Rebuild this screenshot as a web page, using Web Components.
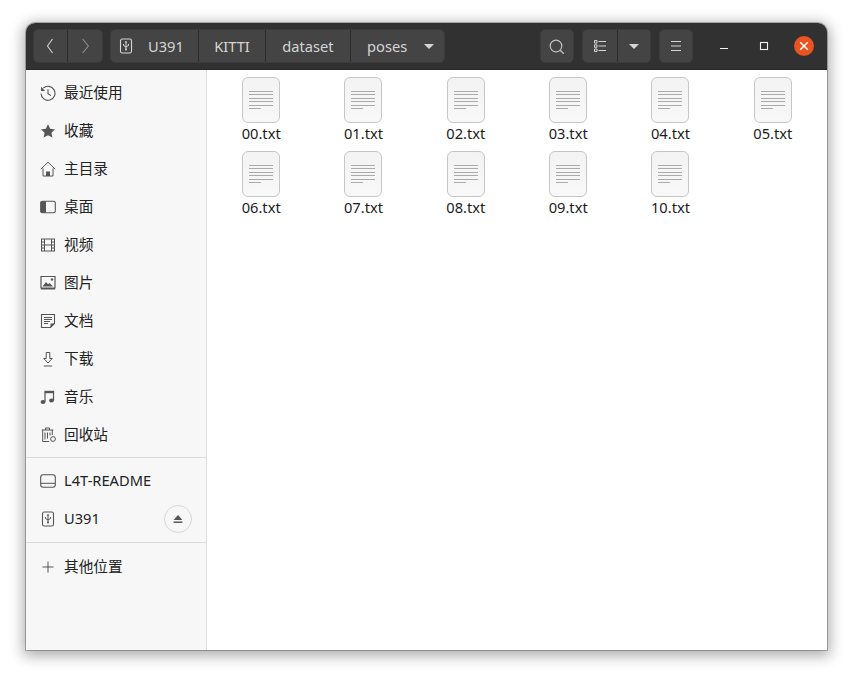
<!DOCTYPE html>
<html>
<head>
<meta charset="utf-8">
<title>poses</title>
<style>
  html, body { margin: 0; height: 100%; background: #fff; }
  body { font: 14.67px "Noto Sans", "Noto Sans CJK SC", sans-serif; }
</style>
</head>
<body>
<files-window></files-window>
<script>
  const ICONS = {
    recent: '<path d="M3.200 3.200A7 7 0 1 1 1 8.500" fill="none" stroke-width="1.100"/><path d="M1 1.800v4.200h4.200z" stroke="none"/><path d="M8 4.200v4.600l3 1.800" fill="none" stroke-width="1.100"/>',
    star: '<path d="M8 1.300l2.100 4.500 4.900.6-3.600 3.300 1 4.900L8 12.200l-4.400 2.400 1-4.900L1 6.400l4.900-.6z" stroke="none"/>',
    home: '<path d="M.8 8.200L8 1.200l7.200 7" fill="none" stroke-width="1"/><path d="M3 7.400V15h10V7.400" fill="none" stroke-width="1"/><path d="M6 15v-4.500h4V15z" stroke="none"/>',
    desktop: '<rect x=".7" y="2.200" width="14.600" height="11.600" rx="1.600" fill="none" stroke-width="1.100"/><path d="M.7 3.600c0-.8.6-1.400 1.400-1.400H6v11.600H2.100c-.8 0-1.400-.6-1.400-1.400z" stroke="none"/>',
    video: '<rect x="1.500" y="2" width="13" height="12" fill="none" stroke-width="1"/><path d="M4.500 2v12M11.500 2v12M4.500 8h7M1.500 5h3M1.500 8h3M1.500 11h3M11.500 5h3M11.500 8h3M11.500 11h3" fill="none" stroke-width="1"/>',
    image: '<path d="M1 1.500h14v11.500H1z" fill="none" stroke-width="1.200"/><path d="M1 13h14v1.500H1z" stroke="none"/><path d="M2.500 11.500l3.500-4.500 2 2.200 1.500-1.200 3.500 3.500z" stroke="none"/><circle cx="12" cy="4.500" r="1.200" stroke="none"/>',
    doc: '<path d="M1.500 1.500h13v9l-4 4h-9z" fill="none" stroke-width="1.100"/><path d="M4 4.500h8M4 6.500h8M4 8.500h6M4 10.500h4" fill="none" stroke-width="1"/><path d="M10.500 14.500v-4h4z" stroke="none"/>',
    download: '<path d="M6.200 1.500h3.600v6h2.400L8 12 3.800 7.500h2.400z" fill="none" stroke-width="1"/><path d="M3.800 15h8.400" fill="none" stroke-width="1"/>',
    music: '<path d="M5 3.500V13M13.500 2v9.500" fill="none" stroke-width="1.200"/><path d="M4.400 1.800h9.700v2.400H4.400z" stroke="none"/><ellipse cx="3" cy="13" rx="2.400" ry="2" stroke="none"/><ellipse cx="11.500" cy="11.500" rx="2.400" ry="2" stroke="none"/>',
    trash: '<path d="M1.700 3h11.600M5.500 3V1h4v2" fill="none" stroke-width="1"/><path d="M2.700 3v11.500h6.500M12.300 3v5" fill="none" stroke-width="1"/><path d="M5 5.500v7M7.500 5.500v6M10 5.500v3" fill="none" stroke-width="1"/><circle cx="13" cy="12" r="2.400" fill="none" stroke-width="1"/>',
    drive: '<rect x=".7" y="1.700" width="14.600" height="12.600" rx="2.500" fill="none" stroke-width="1.100"/><path d="M1 10.300h14" fill="none" stroke-width="1"/>',
    usb: '<rect x="2.500" y="1" width="11" height="14" rx="1.800" fill="none" stroke-width="1.100"/><path d="M8 3.500v8M5.500 6v1.500L8 9l2.500-1.500V6" fill="none" stroke-width="1"/><path d="M6.800 4.500L8 2.800l1.200 1.700z" stroke="none"/><circle cx="8" cy="11.600" r="1" stroke="none"/>',
    plus: '<path d="M8 2.500v11M2.500 8h11" fill="none" stroke-width="1"/>',
    back: '<path d="M9.500 1L4.500 8l5 7" fill="none" stroke-width="1.100"/>',
    forward: '<path d="M5.700 1L11.300 8l-5.600 7" fill="none" stroke-width="1.100"/>',
    caret: '<path d="M3 6h10L8 11z" stroke="none"/>',
    search: '<circle cx="7" cy="8" r="5.800" fill="none" stroke-width="1.200"/><path d="M11.200 12.200l3.600 3.500" fill="none" stroke-width="1.400"/>',
    list: '<path d="M2.500 2.500h2.500V5H2.500zM2.500 6.800h2.500v2.500H2.500zM2.500 11h2.500v2.500H2.500z" fill="none" stroke-width="1"/><path d="M6.500 3.500H14M6.500 8H14M6.500 12.500H14" fill="none" stroke-width="1"/>',
    menu: '<path d="M3 3.500h10M3 8h10M3 12.500h10" fill="none" stroke-width="1"/>',
    minimize: '<path d="M4 10.500h8" fill="none" stroke-width="1.200"/>',
    maximize: '<rect x="4.500" y="4.500" width="7" height="7" fill="none" stroke-width="1.100"/>',
    close: '<path d="M4.200 4.200l7.600 7.600M11.800 4.200l-7.600 7.600" fill="none" stroke-width="1.500"/>',
    eject: '<path d="M8 3.500l5 5.500H3z" stroke="none"/><path d="M3 10.800h10v1.700H3z" stroke="none"/>'
  };

  function icon(name, size) {
    return `<svg width="${size}" height="${size}" viewBox="0 0 16 16" fill="currentColor" stroke="currentColor" aria-hidden="true">${ICONS[name]}</svg>`;
  }

  // base class, saves repeating attachShadow everywhere
  class ShadowEl extends HTMLElement {
    render(html) {
      if (!this.shadowRoot) this.attachShadow({ mode: 'open' });
      this.shadowRoot.innerHTML = html;
    }
  }

  // linked group of dark header buttons
  class HeaderGroup extends ShadowEl {
    connectedCallback() {
      this.render(`
        <style>
          :host {
            display: flex;
            flex: none;
            height: 34px;
            box-sizing: border-box;
            background: #454444;
            border: 1px solid #3c3b3b;
            border-radius: 5px;
            overflow: hidden;
          }
          ::slotted(*:not(:first-child)) { border-left: 1px solid #2d2c2c; }
        </style>
        <slot></slot>`);
    }
  }

  class HeaderButton extends ShadowEl {
    connectedCallback() {
      const w = this.getAttribute('w');
      const ic = this.getAttribute('icon');
      const pad = this.getAttribute('pad');
      const label = this.textContent.trim() ? '<span><slot></slot></span>' : '';
      this.render(`
        <style>
          :host {
            display: flex;
            flex: none;
            box-sizing: border-box;
            align-items: center;
            justify-content: ${pad ? 'flex-start' : 'center'};
            padding-left: ${pad || 0}px;
            gap: 14px;
            width: ${w}px;
            height: 32px;
            color: ${this.getAttribute('color') || '#d6d5d3'};
            font: 14.67px/20px "Noto Sans", "Noto Sans CJK SC", sans-serif;
          }
          span { padding-bottom: 1px; }
        </style>
        ${ic ? icon(ic, 16) : ''}${label}${this.hasAttribute('caret') ? icon('caret', 16) : ''}`);
    }
  }

  class PlaceRow extends ShadowEl {
    connectedCallback() {
      this.render(`
        <style>
          :host {
            display: flex;
            align-items: center;
            height: 38px;
            padding: 0 14px;
            color: #222;
            font: 14.67px/20px "Noto Sans", "Noto Sans CJK SC", sans-serif;
          }
          svg { color: #555; flex: none; margin-right: 8px; }
          span { flex: 1; padding-bottom: 2px; }
          .eject {
            flex: none;
            display: flex;
            align-items: center;
            justify-content: center;
            box-sizing: border-box;
            width: 28px;
            height: 28px;
            border: 1px solid #d8d8d8;
            border-radius: 50%;
          }
          .eject svg { margin: 0; }
        </style>
        ${icon(this.getAttribute('icon'), 16)}<span><slot></slot></span>
        ${this.hasAttribute('eject') ? `<div class="eject">${icon('eject', 14)}</div>` : ''}`);
    }
  }

  class FileItem extends ShadowEl {
    connectedCallback() {
      this.render(`
        <style>
          :host {
            display: flex;
            flex-direction: column;
            align-items: center;
            height: 74px;
            padding-top: 7px;
            box-sizing: border-box;
            color: #1c1c1c;
            font: 14.67px/20px "Noto Sans", "Noto Sans CJK SC", sans-serif;
          }
          .page {
            box-sizing: border-box;
            width: 38px;
            height: 46px;
            border: 1px solid #c6c6c6;
            border-radius: 6px;
            background: linear-gradient(#f3f3f3, #f8f8f8);
            padding: 13px 6px 0;
          }
          .page i {
            display: block;
            height: 1px;
            margin-bottom: 2.4px;
            background: #aaa;
          }
          .page i:last-child { width: 12px; }
        </style>
        <div class="page"><i></i><i></i><i></i><i></i><i></i><i></i></div>
        <div class="name"><slot></slot></div>`);
    }
  }

  class FilesWindow extends ShadowEl {
    connectedCallback() {
      const places = [
        ['recent', '最近使用'], ['star', '收藏'], ['home', '主目录'], ['desktop', '桌面'], ['video', '视频'],
        ['image', '图片'], ['doc', '文档'], ['download', '下载'], ['music', '音乐'], ['trash', '回收站']
      ];
      const files = ['00', '01', '02', '03', '04', '05', '06', '07', '08', '09', '10'];
      this.render(`
        <style>
          :host {
            display: block;
            box-sizing: border-box;
            height: 679px;
            padding: 23px 26px 29px;
            background: #fff;
          }
          .win {
            display: flex;
            flex-direction: column;
            height: 100%;
            border-radius: 9px 9px 0 0;
            box-shadow: 0 3px 14px 3px rgba(0,0,0,.32), 0 0 0 1px rgba(0,0,0,.25);
            overflow: hidden;
            background: #fff;
          }
          header {
            display: flex;
            align-items: center;
            flex: none;
            box-sizing: border-box;
            height: 47px;
            padding: 0 13px 0 7px;
            background: #323131;
            border-bottom: 1px solid #2a2929;
          }
          .sp { flex: 1; }
          .wc {
            display: flex;
            align-items: center;
            justify-content: center;
            width: 20px;
            height: 20px;
            margin-left: 20px;
            color: #f2f2f2;
          }
          .wc.close { background: #e95420; border-radius: 50%; color: #fff; }
          .body { display: flex; flex: 1; min-height: 0; }
          nav {
            flex: none;
            box-sizing: border-box;
            width: 181px;
            padding-top: 4px;
            background: #f7f7f7;
            border-right: 1px solid #dcdcdc;
          }
          hr { border: 0; border-top: 1px solid #dcdcdc; margin: 3px 0 4px; }
          hr.low { margin: 4px 0 5px; }
          main {
            flex: 1;
            display: grid;
            grid-template-columns: repeat(6, 1fr);
            align-content: start;
            padding: 0 3px;
            background: #fff;
          }
        </style>
        <div class="win">
          <header>
            <header-group style="margin-right:7px">
              <header-button w="33" icon="back"></header-button>
              <header-button w="35" icon="forward" color="#8f8e8c"></header-button>
            </header-group>
            <header-group>
              <header-button w="87" icon="usb" pad="7">U391</header-button>
              <header-button w="67">KITTI</header-button>
              <header-button w="85">dataset</header-button>
              <header-button w="94" pad="16" caret>poses</header-button>
            </header-group>
            <div class="sp"></div>
            <header-group style="margin-right:8px"><header-button w="32" icon="search" color="#c4c3c1"></header-button></header-group>
            <header-group style="margin-right:8px">
              <header-button w="34" icon="list"></header-button>
              <header-button w="33" icon="caret"></header-button>
            </header-group>
            <header-group style="margin-right:1px"><header-button w="32" icon="menu"></header-button></header-group>
            <div class="wc">${icon('minimize', 16)}</div>
            <div class="wc">${icon('maximize', 16)}</div>
            <div class="wc close">${icon('close', 16)}</div>
          </header>
          <div class="body">
            <nav>
              ${places.map(p => `<place-row icon="${p[0]}">${p[1]}</place-row>`).join('')}
              <hr>
              <place-row icon="drive">L4T-README</place-row>
              <place-row icon="usb" eject>U391</place-row>
              <hr class="low">
              <place-row icon="plus">其他位置</place-row>
            </nav>
            <main>${files.map(f => `<file-item>${f}.txt</file-item>`).join('')}</main>
          </div>
        </div>`);
    }
  }

  customElements.define('header-group', HeaderGroup);
  customElements.define('header-button', HeaderButton);
  customElements.define('place-row', PlaceRow);
  customElements.define('file-item', FileItem);
  customElements.define('files-window', FilesWindow);
</script>
</body>
</html>
